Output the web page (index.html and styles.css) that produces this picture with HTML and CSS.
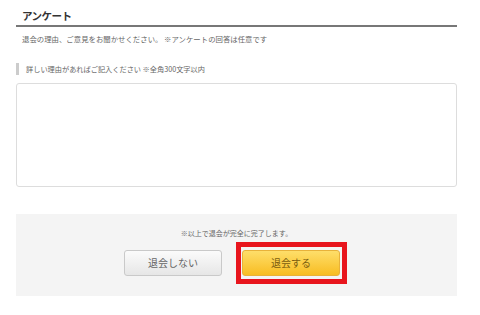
FILE: index.html
```html
<!DOCTYPE html>
<html lang="ja">
<head>
	<meta charset="UTF-8">
	<title>アンケート</title>
	<link rel="stylesheet" href="styles.css">
</head>
<body>
	<div class="wrap">
		<h2 class="ttl">アンケート</h2>
		<p class="lead">退会の理由、ご意見をお聞かせください。 ※アンケートの回答は任意です</p>
		<p class="label">詳しい理由があればご記入ください ※全角300文字以内</p>
		<textarea class="reason"></textarea>

		<div class="confirm">
			<p class="note">※以上で退会が完全に完了します。</p>
			<div class="btns">
				<button class="btn btn-cancel" type="button">退会しない</button>
				<div class="mark">
					<button class="btn btn-submit" type="button">退会する</button>
				</div>
			</div>
		</div>
	</div>
</body>
</html>
```
FILE: styles.css
```css
body, div, h2, p {
	margin: 0;
	padding: 0;
}
body {
	font-family: "Noto Sans CJK JP", "Noto Sans", sans-serif;
	color: #555;
	background: #fff;
}
.wrap {
	width: 441px;
	margin: 0 0 0 16px;
	padding-top: 10px;
}
.ttl {
	padding: 0 0 3px 6px;
	font-size: 10.5px;
	line-height: 12px;
	letter-spacing: -0.5px;
	font-weight: 700;
	color: #333;
	border-bottom: 2px solid #777;
}
.lead {
	margin-top: 7px;
	padding-left: 6px;
	font-size: 7.4px;
	line-height: 10px;
	color: #666;
}
.label {
	margin-top: 19px;
	padding-left: 7px;
	font-size: 7.2px;
	line-height: 12px;
	color: #666;
	border-left: 3px solid #ccc;
}
.reason {
	display: block;
	box-sizing: border-box;
	width: 441px;
	height: 104px;
	margin-top: 8px;
	border: 1px solid #ddd;
	border-radius: 3px;
	resize: none;
}
.confirm {
	margin-top: 27px;
	padding: 14px 0 12px;
	background: #f4f4f4;
	text-align: center;
}
.note {
	font-size: 7px;
	line-height: 10px;
	color: #666;
}
.btns {
	display: flex;
	justify-content: center;
	align-items: center;
	gap: 14px;
	margin-top: 4px;
	padding-right: 2px;
}
.btn {
	width: 98px;
	height: 26px;
	font-family: inherit;
	font-size: 10px;
	border-radius: 3px;
	cursor: pointer;
}
.btn-cancel {
	color: #666;
	background: linear-gradient(#fbfbfb, #e6e6e6);
	border: 1px solid #c9c9c9;
}
.btn-submit {
	color: #7a5d10;
	background: linear-gradient(#fede6a, #f8bd22);
	border: 1px solid #e8b23a;
}
.mark {
	padding: 1px 2px 3px 1px;
	border: 5px solid #e8151d;
}
```
